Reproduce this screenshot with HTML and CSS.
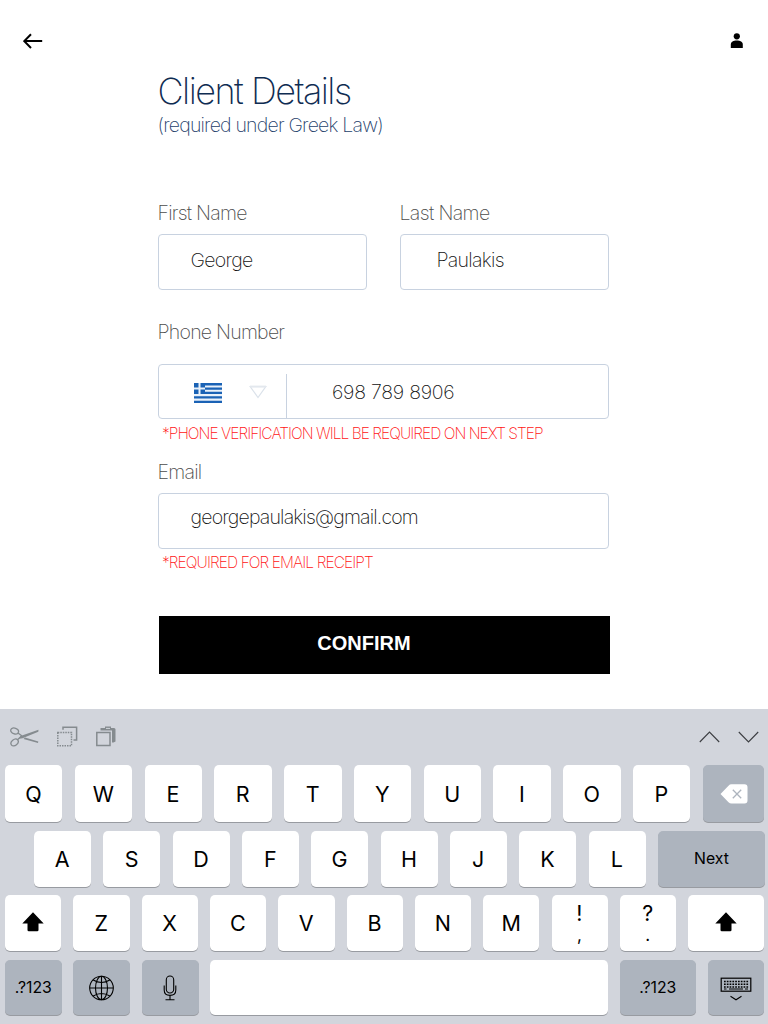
FILE: index.html
```html
<!DOCTYPE html>
<html lang="en">
<head>
<meta charset="utf-8">
<title>Client Details</title>
<link rel="stylesheet" href="styles.css">
</head>
<body>
<header class="topbar">
  <svg class="back" width="20" height="16" viewBox="0 0 20 16"><path d="M19.200 8.100H1.500M8 1.200L1.300 8.100L8 15" fill="none" stroke="#000" stroke-width="2"/></svg>
  <svg class="user" width="14" height="16" viewBox="0 0 14 16"><circle cx="6.800" cy="3.300" r="3.100"/><path d="M.8 15V11.600C.8 9 3.500 7.600 6.800 7.600S12.800 9 12.800 11.600V15Z"/></svg>
</header>
<main class="form">
  <h1 class="title">Client Details</h1>
  <p class="subtitle">(required under Greek Law)</p>
  <div class="names">
    <div class="col">
      <label class="label">First Name</label>
      <div class="field">George</div>
    </div>
    <div class="col">
      <label class="label label-last">Last Name</label>
      <div class="field field-last">Paulakis</div>
    </div>
  </div>
  <label class="label label-phone">Phone Number</label>
  <div class="field phone">
    <div class="country">
      <svg class="flag" width="28" height="20" viewBox="0 0 28 20"><path fill="#e9f1fa" d="M0 0h28v20H0z"/><path fill="#1a62b5" d="M0 0h28v2.600H0zM0 4.500h28v2.200H0zM0 8.800h28v2.200H0zM0 13.200h28v2.200H0zM0 17.700h28v2.300H0z"/><path fill="#1a62b5" d="M0 0h11v11H0z"/><path fill="#e9f1fa" d="M4.500 0h2v11h-2zM0 4.600h11v2H0z"/></svg>
      <svg class="caret" width="18" height="14" viewBox="0 0 18 14"><path d="M1.200 1.500H16.800L9 12.500Z" fill="none" stroke="#dbe2ea" stroke-width="1.200"/><path d="M1 1.600H17" stroke="#e3e8ee" stroke-width="2"/></svg>
    </div>
    <div class="number">698 789 8906</div>
  </div>
  <p class="note note-phone">*PHONE VERIFICATION WILL BE REQUIRED ON NEXT STEP</p>
  <label class="label label-email">Email</label>
  <div class="field field-email">georgepaulakis@gmail.com</div>
  <p class="note note-email">*REQUIRED FOR EMAIL RECEIPT</p>
  <button class="confirm">CONFIRM</button>
</main>
<section class="keyboard">
  <div class="tools">
    <svg class="cut" width="30" height="20" viewBox="0 0 30 20" fill="none" stroke="#858b8f" stroke-width="1.300"><ellipse cx="4.600" cy="4" rx="4" ry="2.900" transform="rotate(20 4.600 4)"/><ellipse cx="4.600" cy="15.500" rx="4" ry="2.900" transform="rotate(-40 4.600 15.500)"/><path d="M8 6L12 9M7.500 12.800L11 9.500"/><path d="M10.500 9L28.500 2.800L28.300 4.700L12.500 11.200L9 11.800ZM15 10.600L28.300 14.500L28 15.900L13.500 11.900Z" fill="#858b8f" stroke="none"/></svg>
    <svg class="copy" width="21" height="21" viewBox="0 0 21 21" fill="none" stroke="#858b8f" stroke-width="1.500"><path d="M6 3.800V1.200H19.600V14H16.500"/><path d="M.8 6.500H14.500V19.800H.8Z" stroke-dasharray="1.500 1"/></svg>
    <svg class="paste" width="20" height="21" viewBox="0 0 20 21"><path fill="#858b8f" d="M4.500 2H9V.5H15V2H18Q19.500 2 19.500 3.500V15.500L17.500 16.500H16V4.500H4.500Z"/><path d="M10 2.400H14" stroke="#d2d5dc"/><path d="M.8 6.600H14V19.500H.8Z" fill="#d2d5dc" stroke="#858b8f" stroke-width="1.500"/></svg>
    <svg class="up" width="21" height="12" viewBox="0 0 21 12"><path d="M.8 11L10.500 1L20.200 11" fill="none" stroke="#3b3d41" stroke-width="1.100"/></svg>
    <svg class="down" width="21" height="12" viewBox="0 0 21 12"><path d="M.8 1L10.500 11L20.200 1" fill="none" stroke="#3b3d41" stroke-width="1.100"/></svg>
  </div>
  <div class="row row1">
    <span class="key">Q</span><span class="key">W</span><span class="key">E</span><span class="key">R</span><span class="key">T</span><span class="key">Y</span><span class="key">U</span><span class="key">I</span><span class="key">O</span><span class="key">P</span>
    <span class="key dark"><svg width="28" height="20" viewBox="0 0 28 20"><path fill="#fff" d="M.5 10L8.500 1.700Q9.800.3 11.500.3H24.500Q27.500.3 27.500 3.300V16.500Q27.500 19.500 24.500 19.500H11.500Q9.800 19.500 8.500 18.200Z"/><path d="M12.800 5.800L21.200 14.200M21.200 5.800L12.800 14.200" stroke="#adb4be" stroke-width="1.300"/></svg></span>
  </div>
  <div class="row row2">
    <span class="key">A</span><span class="key">S</span><span class="key">D</span><span class="key">F</span><span class="key">G</span><span class="key">H</span><span class="key">J</span><span class="key">K</span><span class="key">L</span><span class="key dark word">Next</span>
  </div>
  <div class="row row3">
    <span class="key"><svg class="shift" width="22" height="20" viewBox="0 0 22 20"><path d="M11 .3L21.700 11.500H16.500V18Q16.500 19.300 15.200 19.300H6.800Q5.500 19.300 5.500 18V11.500H.3Z"/></svg></span><span class="key">Z</span><span class="key">X</span><span class="key">C</span><span class="key">V</span><span class="key">B</span><span class="key">N</span><span class="key">M</span><span class="key double"><span class="top">!</span><span class="bottom">,</span></span><span class="key double"><span class="top">?</span><span class="bottom">.</span></span>
    <span class="key"><svg class="shift" width="22" height="20" viewBox="0 0 22 20"><path d="M11 .3L21.700 11.500H16.500V18Q16.500 19.300 15.200 19.300H6.800Q5.500 19.300 5.500 18V11.500H.3Z"/></svg></span>
  </div>
  <div class="row row4">
    <span class="key dark word">.?123</span>
    <span class="key dark"><svg class="globe" width="26" height="26" viewBox="0 0 26 26" fill="none" stroke="#000" stroke-width="1.100"><circle cx="12.500" cy="13" r="11.800"/><ellipse cx="12.500" cy="13" rx="6" ry="11.800"/><path d="M12.500 1.200V24.800M.7 13H24.300M4.200 5Q12.500 10 20.800 5M4.200 21Q12.500 16 20.800 21"/></svg></span>
    <span class="key dark"><svg class="mic" width="14" height="26" viewBox="0 0 14 26" fill="none" stroke="#000" stroke-width="1.100"><rect x="3.300" y="1" width="7.400" height="17" rx="3.700"/><path d="M1.200 10.500V15Q1.200 20.400 7 20.400T12.800 15V10.500M7 20.400V24.500M2.500 24.700H11.500"/></svg></span>
    <span class="key"></span>
    <span class="key dark word">.?123</span>
    <span class="key dark"><svg class="hide" width="32" height="24" viewBox="0 0 32 24" fill="none" stroke="#000"><rect x="1.200" y="1.200" width="29.600" height="13" stroke-width="1.200"/><path d="M4 4.500H28.500M4 7.300H28.500M4 10H28.500" stroke-width="1.500" stroke-dasharray="1.700 1.100"/><path d="M4 12H6.500M9 12H23M25 12H28" stroke-width="1.200"/><path d="M10.500 19.300L16 22.800L21.500 19.300" stroke-width="1.100"/></svg></span>
  </div>
</section>
</body>
</html>
```
FILE: styles.css
```css
* { box-sizing: border-box; }
body {
  margin: 0;
  width: 768px;
  height: 1024px;
  overflow: hidden;
  background: #fff;
  font-family: Inter, "Liberation Sans", sans-serif;
  display: flex;
  flex-direction: column;
}
svg { display: block; flex: none; }
h1, p { margin: 0; font-weight: 200; white-space: nowrap; }
.topbar {
  height: 69px;
  padding: 33px 24px 0 23px;
  display: flex;
  justify-content: space-between;
}
.form {
  height: 640px;
  padding-left: 158px;
  font-weight: 200;
}
.title { font-size: 36px; line-height: 44px; letter-spacing: -1.5px; margin-left: -0.5px; color: #0f2c52; }
.subtitle { font-size: 19.500px; line-height: 26px; letter-spacing: -0.8px; margin: -1px 0 0 -0.5px; color: #24406a; }
.names { display: flex; gap: 33px; margin-top: 62px; }
.col { width: 209px; }
.label {
  display: block;
  height: 34px;
  line-height: 26px;
  font-size: 19.500px;
  letter-spacing: -0.75px;
  margin-left: -0.5px;
  color: #4c4c4c;
  white-space: nowrap;
}
.label.label-last { letter-spacing: -0.62px; }
.field {
  width: 451px;
  height: 56px;
  border: 1px solid #c8d2e0;
  border-radius: 4px;
  padding: 0 0 4px 31.500px;
  display: flex;
  align-items: center;
  font-size: 19.500px;
  letter-spacing: -0.7px;
  color: #111;
  white-space: nowrap;
}
.col .field { width: 209px; }
.field.field-last { padding-left: 35.500px; }
.field.field-email { padding-bottom: 8px; letter-spacing: -0.82px; }
.label-phone { margin-top: 29px; height: 45px; }
.field.phone { height: 55px; padding: 0; }
.country {
  width: 128px;
  height: 44px;
  margin-top: 9px;
  border-right: 1px solid #c8d2e0;
  display: flex;
  align-items: center;
  padding: 0 0 7px 35px;
  gap: 27px;
}
.caret { margin-bottom: 1px; }
.number { padding-left: 45px; letter-spacing: -0.25px; margin-top: 1px; }
.note { height: 20px; padding-left: 4px; line-height: 20px; font-size: 15.500px; color: #ff1414; }
.note-phone { margin-top: 5px; letter-spacing: -0.96px; }
.note-email { margin-top: 4px; letter-spacing: -0.91px; }
.label-email { margin-top: 15px; height: 34px; }
.confirm {
  display: block;
  width: 451px;
  height: 58px;
  margin: 43px 0 0 1px;
  padding: 0 41px 5px 0;
  border: 0;
  background: #000;
  color: #fff;
  font: 700 20px/24px "Liberation Sans", sans-serif;
}
.keyboard { height: 315px; background: #d2d5dc; padding: 0 3.500px 0 5px; }
.tools { height: 56px; padding: 17px 6px 0 4.500px; display: flex; }
.cut { margin-top: 1px; }
.copy { margin-left: 17.500px; }
.paste { margin-left: 18px; }
.up { margin: 5px 0 0 auto; }
.down { margin: 5px 0 0 18px; }
.row { display: grid; }
.row1 { grid-template-columns: repeat(10, 57.400px) 61.500px; column-gap: 12.400px; height: 57px; }
.row2 { grid-template-columns: repeat(9, 57px) 107px; column-gap: 12.330px; height: 55.500px; margin: 9px 0 0 29px; }
.row3 { grid-template-columns: repeat(10, 56.300px) 76px; column-gap: 12.030px; height: 55.500px; margin-top: 8.500px; }
.row4 { grid-template-columns: 56.500px 57px 57px 398px 76.500px 56.500px; column-gap: 11.500px; height: 55.500px; margin-top: 9px; }
.key {
  display: flex;
  align-items: center;
  justify-content: center;
  background: #fff;
  border-radius: 5px;
  box-shadow: 0 1px 0 #989ba1;
  font-size: 21.500px;
  font-weight: 400;
  line-height: 26px;
  padding-right: 0.5px;
  color: #000;
}
.dark { background: #adb4be; padding-right: 0; }
.word { font-size: 15.800px; padding-top: 1px; }
.double { flex-direction: column; }
.double .top { line-height: 26px; margin-top: 0; }
.double .bottom { font-size: 17px; line-height: 20px; margin-top: -1px; }
.shift { margin-bottom: 2px; }
.globe, .mic { margin-top: 2px; }
.mic { margin-right: 1px; }
.hide { margin-top: 3px; }
```
